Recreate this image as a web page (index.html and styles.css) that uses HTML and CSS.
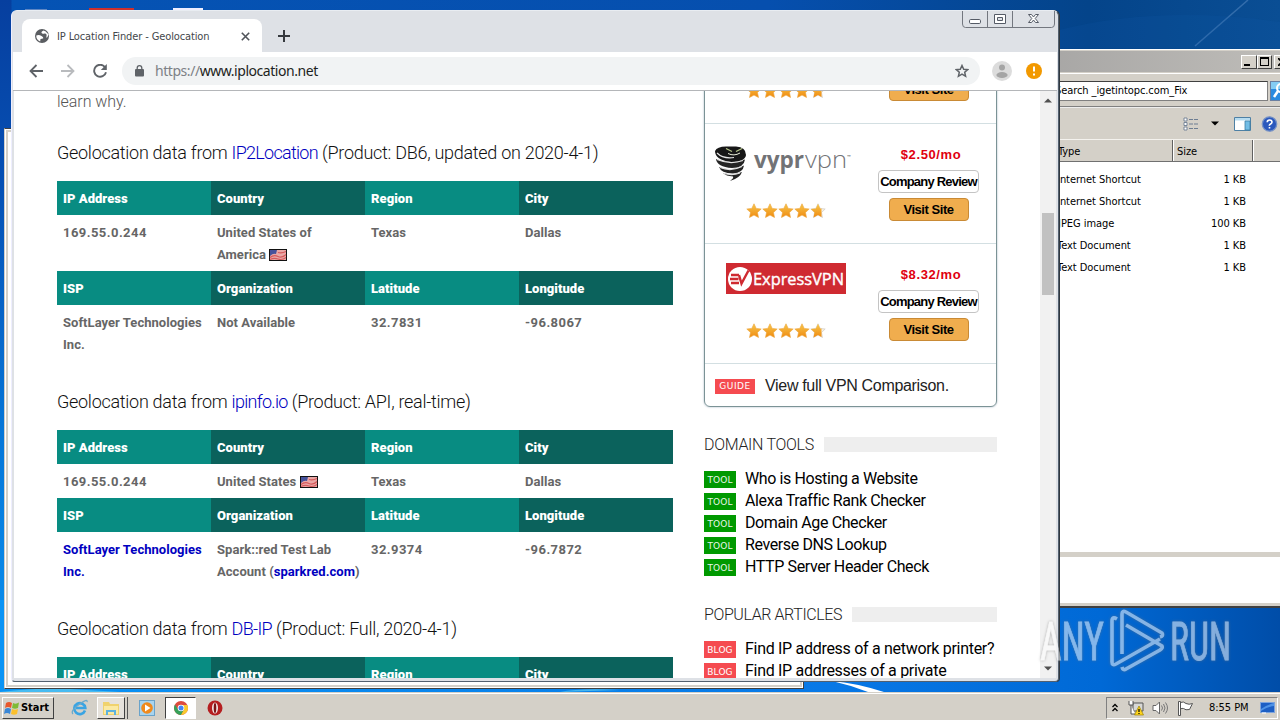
FILE: index.html
```html
<!DOCTYPE html>
<html lang="en">
<head>
<meta charset="utf-8">
<title>IP Location Finder - Geolocation</title>
<link rel="stylesheet" href="styles.css">
</head>
<body>
<svg class="defs" width="0" height="0">
  <defs>
    <linearGradient id="gold" x1="0" y1="0" x2="0" y2="1"><stop offset="0" stop-color="#f7c84e"/><stop offset="1" stop-color="#f08a10"/></linearGradient>
    <symbol id="star" viewBox="0 0 16 16"><path d="M8 .8l2.200 4.600 5 .6-3.700 3.500 1 5L8 12.100l-4.500 2.400 1-5L.8 6l5-.6z" fill="url(#gold)" stroke="#eda53a" stroke-width=".6"/></symbol>
    <symbol id="stars" viewBox="0 0 80 16">
      <use href="#star" x="0" width="16" height="16"/><use href="#star" x="16" width="16" height="16"/><use href="#star" x="32" width="16" height="16"/><use href="#star" x="48" width="16" height="16"/>
      <path d="M72 .8l2.200 4.600 5 .6-3.700 3.500 1 5L72 12.100l-4.500 2.400 1-5L64.800 6l5-.6z" fill="#f5f0e8" stroke="#c9c3b8" stroke-width=".6"/>
      <path d="M72 .8l2.200 4.600 1.300.2v8.300L72 12.100l-4.500 2.400 1-5L64.800 6l5-.6z" fill="url(#gold)"/>
    </symbol>
    <symbol id="flag" viewBox="0 0 18 12"><rect width="18" height="12" fill="#111"/><rect x="1" y="1" width="16" height="10" fill="#e9a7a5"/><path d="M1 8.500q4-3 8-1t8-2M9 3.500q4 1 8-1M1 10.500q4-2 8-.5t8-1.500" stroke="#d65a5c" stroke-width="1.200" fill="none"/><path d="M1 1h7l-1 4q-3-1-6 2z" fill="#46529b"/></symbol>
  </defs>
</svg>
<div class="desktop">
  <svg class="wallpaper" width="1280" height="720" viewBox="0 0 1280 720">
    <path d="M1195 46L1248 0" stroke="#4f83bd" stroke-width="1.500" opacity=".6"/>
    <path d="M1059 30Q1160 5 1280 22V48H1059z" fill="#1560ae" opacity=".15"/>
    <rect x="89" y="8" width="45" height="3" fill="#d0302c"/><rect x="173" y="8" width="30" height="3" fill="#eef"/><rect x="25" y="9" width="22" height="2" fill="#5f87c4"/>
    <path d="M832 681Q856 683 884 692H868Q850 685 832 681z" fill="#fff"/>
    <path d="M0 692Q40 687 70 689L120 692zM560 692Q580 688 620 690z" fill="#63cdf0" opacity=".7"/>
  </svg>

  <div class="back-window"></div>

  <div class="explorer">
    <div class="ex-title"><span class="ex-btn"><i class="g-min"></i></span><span class="ex-btn"><i class="g-max"></i></span><span class="ex-btn"><svg width="8" height="8" viewBox="0 0 8 8"><path d="M0 0l8 8M8 0L0 8" stroke="#000" stroke-width="1.700"/></svg></span></div>
    <div class="ex-search"><div class="ex-field"><span>Search _igetintopc.com_Fix</span></div>
      <svg width="20" height="20" viewBox="0 0 20 20"><rect x=".5" y=".5" width="19" height="19" fill="#2a8be0" stroke="#6a7fa0"/><path d="M1 1h18v7H1z" fill="#84cdf4"/><circle cx="11" cy="7" r="4" fill="none" stroke="#fff" stroke-width="2"/><path d="M8 10l-4 6" stroke="#fff" stroke-width="2.500"/></svg>
    </div>
    <div class="ex-tools">
      <svg class="tl-list" width="16" height="14" viewBox="0 0 16 14"><path d="M1 1h3v3H1zM1 5.500h3v3H1zM1 10h3v3H1z" fill="#fff" stroke="#6d7d92" stroke-width=".9"/><path d="M6 2.500h4M11 2.500h4M6 7h4M11 7h4M6 11.500h4M11 11.500h4" stroke="#6d7d92"/></svg>
      <svg class="tl-arrow" width="8" height="5"><path d="M0 .5h8L4 4.500z"/></svg>
      <svg class="tl-pane" width="17" height="14" viewBox="0 0 17 14"><path d="M.5.5h16v13H.5z" fill="#fff" stroke="#4e80a4"/><path d="M1 1h15v2.500H1z" fill="#b7dcf0"/><path d="M11 4h5v9h-5z" fill="#72bde5" stroke="#3d7fa5" stroke-width=".8"/></svg>
      <svg width="17" height="16" viewBox="0 0 17 16"><circle cx="8.500" cy="8" r="7.200" fill="#2a58bd" stroke="#7591c5" stroke-width="1.300"/><path d="M6.200 6.300Q6.200 4 8.600 4T11 6.100Q11 7.300 9.600 8T8.500 9.700M8.500 11v1.600" fill="none" stroke="#fff" stroke-width="1.600"/></svg>
    </div>
    <div class="ex-head"><span class="c-type">Type</span><span class="c-size">Size</span><span class="c-rest"></span></div>
    <div class="ex-list">
      <div class="ex-row"><span>Internet Shortcut</span><span>1 KB</span></div>
      <div class="ex-row"><span>Internet Shortcut</span><span>1 KB</span></div>
      <div class="ex-row jpeg"><span>JPEG image</span><span>100 KB</span></div>
      <div class="ex-row"><span>Text Document</span><span>1 KB</span></div>
      <div class="ex-row"><span>Text Document</span><span>1 KB</span></div>
    </div>
    <div class="ex-foot"></div>
  </div>

  <div class="chrome">
    <div class="tabstrip">
      <div class="tab">
        <svg width="14" height="14" viewBox="0 0 14 14"><circle cx="7" cy="7" r="7" fill="#5a5d61"/><path d="M1.300 6.500Q4 5.500 6.500 7T8 9.500L5.500 10 5.200 12.500Q1 11 1.300 6.500zM8.500 1.500Q6 2.500 6.500 3.800T9.500 4.500 11.500 7 12.700 7.500 12.500 4.500Q11 2 8.500 1.500z" fill="#fff"/></svg>
        <span class="tab-title">IP Location Finder - Geolocation</span>
        <svg width="9" height="9" viewBox="0 0 9 9"><path d="M.8.8l7.400 7.400M8.200.8L.8 8.200" stroke="#50545a" stroke-width="1.600"/></svg>
      </div>
      <svg class="plus" width="12" height="12" viewBox="0 0 12 12"><path d="M6 0v12M0 6h12" stroke="#36393e" stroke-width="2"/></svg>
      <svg class="winctl" width="93" height="17" viewBox="0 0 93 17">
        <path d="M.5 0v13q0 3.500 3 3.500h86q3 0 3-3.500V0M25.500 0v16M50.500 0v16" fill="none" stroke="#73777f"/>
        <rect x="7.500" y="8.500" width="11" height="4" rx="1.200" fill="#fff" stroke="#555b66"/>
        <path d="M32.500 3.500h11v9h-11zM35.500 6.500h5v3h-5z" fill="#fff" stroke="#555b66" fill-rule="evenodd"/>
        <path d="M66.500 3.500h3L71.500 6l2-2.500h3L73.200 7.500l3.300 4h-3l-2-2.500-2 2.500h-3l3.300-4z" fill="#fff" stroke="#555b66"/>
      </svg>
    </div>
    <div class="toolbar">
      <svg width="14" height="14" viewBox="0 0 14 14"><path d="M14 7H1.500M7.500 1L1.500 7l6 6" fill="none" stroke="#5f6368" stroke-width="1.800"/></svg>
      <svg class="fwd" width="14" height="14" viewBox="0 0 14 14"><path d="M0 7h12.500M6.500 1l6 6-6 6" fill="none" stroke="#b9bbbe" stroke-width="1.800"/></svg>
      <svg class="reload" width="14" height="14" viewBox="0 0 14 14"><path d="M12 3.200A6 6 0 1 0 13 8.200" fill="none" stroke="#5f6368" stroke-width="1.900"/><path d="M13.800 0v6H7.800z" fill="#5f6368"/></svg>
      <div class="omnibox">
        <svg width="9" height="12" viewBox="0 0 9 12"><rect y="4" width="9" height="7.500" rx="1" fill="#5f6368"/><path d="M2.200 5V3a2.300 2.300 0 0 1 4.600 0v2" fill="none" stroke="#5f6368" stroke-width="1.300"/></svg>
        <span class="url"><span class="dim">https://</span>www.iplocation.net</span>
        <svg width="14" height="14" viewBox="0 0 14 14"><path d="M7 1.500l1.700 3.700 4 .4-3 2.700.9 4L7 10.200l-3.600 2.100.9-4-3-2.700 4-.4z" fill="none" stroke="#5f6368" stroke-width="1.500"/></svg>
      </div>
      <svg class="avatar" width="20" height="20" viewBox="0 0 20 20"><circle cx="10" cy="10" r="10" fill="#dcdcdc"/><circle cx="10" cy="6.600" r="3" fill="#a5a5a5"/><ellipse cx="10" cy="14" rx="5.600" ry="3" fill="#a5a5a5"/></svg>
      <svg width="16" height="16" viewBox="0 0 16 16"><circle cx="8" cy="8" r="8" fill="#f29900"/><path d="M8 3.500v5M8 10.500v2" stroke="#fff" stroke-width="2"/></svg>
    </div>
    <div class="viewport">
      <div class="page">
        <div class="main">
          <p class="lead">learn why.</p>
          <h4>Geolocation data from <a>IP2Location</a> (Product: DB6, updated on 2020-4-1)</h4>
          <div class="grid">
            <b>IP Address</b><b>Country</b><b>Region</b><b>City</b>
            <span class="num">169.55.0.244</span><span>United States of<br>America <svg width="18" height="12"><use href="#flag"/></svg></span><span>Texas</span><span>Dallas</span>
            <b>ISP</b><b>Organization</b><b>Latitude</b><b>Longitude</b>
            <span>SoftLayer Technologies<br>Inc.</span><span>Not Available</span><span class="num">32.7831</span><span class="num">-96.8067</span>
          </div>
          <h4>Geolocation data from <a>ipinfo.io</a> (Product: API, real-time)</h4>
          <div class="grid">
            <b>IP Address</b><b>Country</b><b>Region</b><b>City</b>
            <span class="num">169.55.0.244</span><span>United States <svg width="18" height="12"><use href="#flag"/></svg></span><span>Texas</span><span>Dallas</span>
            <b>ISP</b><b>Organization</b><b>Latitude</b><b>Longitude</b>
            <span><a>SoftLayer Technologies<br>Inc.</a></span><span>Spark::red Test Lab<br>Account (<a>sparkred.com</a>)</span><span class="num">32.9374</span><span class="num">-96.7872</span>
          </div>
          <h4>Geolocation data from <a>DB-IP</a> (Product: Full, 2020-4-1)</h4>
          <div class="grid"><b>IP Address</b><b>Country</b><b>Region</b><b>City</b></div>
        </div>
        <div class="side">
          <div class="vpn-box">
            <div class="vpn">
              <div class="brand"><svg width="140" height="38"></svg><svg class="st" width="80" height="16"><use href="#stars"/></svg></div>
              <div class="offer"><div class="price"></div><div class="review ghost"></div><div class="visit">Visit Site</div></div>
            </div>
            <div class="vpn">
              <div class="brand">
                <svg width="140" height="38" viewBox="0 -2 140 38">
                  <path d="M1 6Q3 1.500 12 1.500h10Q32 2 32 10 31 17 17 17 1 15 1 6z" fill="#171717"/>
                  <path d="M2 14Q15 20 31 14.500 30 23 18 23 3 22 2 14zM5 22Q17 27 30 20.500 29 28 19 28.500 7 28 5 22zM9 28Q19 31 28 27 26 33 16 36 20 33 19 31.500 12 31 9 28z" fill="#242424"/>
                  <path d="M3 8Q9 14 20 12.500M3 14.500Q16 20 29 15.500M6 22.500Q17 27 28 21.500M10 28.500Q18 31 26 28" stroke="#e5e5e5" stroke-width="1.200" fill="none"/>
                  <path d="M12 3.500l6 3M28 3.500l-6 3" stroke="#b9c98e" stroke-width="1.300" fill="none"/><path d="M14 8.500q6 3 12-.5" stroke="#e8ecd9" stroke-width="1" fill="none"/>
                  <text x="40" y="23" font-family="Open Sans" font-weight="700" font-size="23" textLength="50" lengthAdjust="spacingAndGlyphs" fill="#727376">vypr</text>
                  <text x="91" y="23" font-family="Open Sans" font-weight="300" font-size="23" textLength="42" lengthAdjust="spacingAndGlyphs" fill="#727376">vpn</text>
                  <text x="133" y="14" font-family="Roboto" font-size="6" fill="#727376">™</text>
                </svg>
                <svg class="st" width="80" height="16"><use href="#stars"/></svg>
              </div>
              <div class="offer"><div class="price">$2.50/mo</div><div class="review">Company Review</div><div class="visit">Visit Site</div></div>
            </div>
            <div class="vpn">
              <div class="brand">
                <svg width="140" height="38" viewBox="0 1 140 38">
                  <rect x="12" y="0" width="120" height="32" fill="#cf2a31"/><circle cx="26" cy="17" r="12" fill="#fff"/>
                  <path d="M17 13h8M16 17h8.500M17 21h8M25 13l2.500 8.500 7-13" fill="none" stroke="#cf2a31" stroke-width="2.400"/>
                  <text x="39" y="23" font-family="Open Sans" font-weight="400" font-size="17" textLength="91" lengthAdjust="spacingAndGlyphs" fill="#fff" stroke="#fff" stroke-width=".4">ExpressVPN</text>
                </svg>
                <svg class="st" width="80" height="16"><use href="#stars"/></svg>
              </div>
              <div class="offer"><div class="price">$8.32/mo</div><div class="review">Company Review</div><div class="visit">Visit Site</div></div>
            </div>
            <div class="guide"><span class="tag red gtag">GUIDE</span><span class="guide-text">View full VPN Comparison.</span></div>
          </div>
          <h5 class="h-tools"><span>DOMAIN TOOLS</span><i></i></h5>
          <ul>
            <li><span class="tag">TOOL</span><span>Who is Hosting a Website</span></li>
            <li><span class="tag">TOOL</span><span>Alexa Traffic Rank Checker</span></li>
            <li><span class="tag">TOOL</span><span>Domain Age Checker</span></li>
            <li><span class="tag">TOOL</span><span>Reverse DNS Lookup</span></li>
            <li><span class="tag">TOOL</span><span>HTTP Server Header Check</span></li>
          </ul>
          <h5 class="h-art"><span>POPULAR ARTICLES</span><i></i></h5>
          <ul class="articles">
            <li><span class="tag red">BLOG</span><span>Find IP address of a network printer?</span></li>
            <li><span class="tag red">BLOG</span><span>Find IP addresses of a private</span></li>
          </ul>
        </div>
      </div>
      <div class="scrollbar">
        <svg width="8" height="5"><path d="M0 4.500h8L4 .5z" fill="#505050"/></svg>
        <div class="track"><div class="thumb"></div></div>
        <svg width="8" height="5"><path d="M0 .5h8L4 4.500z" fill="#505050"/></svg>
      </div>
    </div>
  </div>

  <svg class="watermark" width="200" height="70" viewBox="0 0 200 70">
    <g fill="#fff" stroke="#fff" stroke-width=".8" font-family="Roboto" font-size="53">
      <text x="4" y="55" textLength="64" lengthAdjust="spacingAndGlyphs">ANY</text>
      <text x="134" y="55" textLength="61" lengthAdjust="spacingAndGlyphs">RUN</text>
    </g>
    <path d="M81 13Q76 10 76 15V56Q76 60 80 58L124 33M86 48V8Q86 4 90 6L126 27Q128 30 124 31M90 19L126 40Q127 42 124 44L90 63Q87 65 86 61" transform="translate(0 1)" fill="none" stroke="#fff" stroke-width="3.600"/>
  </svg>

  <div class="taskbar">
    <div class="start">
      <svg width="16" height="16" viewBox="0 0 16 16"><path d="M2 3q3-2 6 0L7 8Q4 6 1 8z" fill="#e8582c"/><path d="M9 3q3 1.500 6-.5L14 8q-3 1.500-6 0z" fill="#7fba36"/><path d="M1 9q3-2 6 0l-1 5q-3-2-6 0z" fill="#3a87d6"/><path d="M8 9q3 1.500 6 0l-1 5q-3 1.500-6 0z" fill="#fbc02d"/></svg>
      <span>Start</span>
    </div>
    <svg class="ie" width="17" height="17" viewBox="0 0 17 17"><path d="M14 11.500A5.500 5.500 0 1 1 14.300 9H5" fill="none" stroke="#3aa4e3" stroke-width="2.600"/><path d="M2 15Q-1 12 8 5.500T16 3" fill="none" stroke="#6aa9cc" stroke-width="1.300"/></svg>
    <div class="task folder"><svg width="18" height="17" viewBox="0 0 18 17"><path d="M1 3h6l1 2h9v11H1z" fill="#f0d26d"/><path d="M2 7h14v8H2z" fill="#fbe9a2"/><path d="M4 16v-5h10v5h-2v-3H6v3z" fill="#5eb2de"/></svg></div>
    <svg class="wmp" width="16" height="16" viewBox="0 0 16 16"><rect x=".5" y=".5" width="15" height="15" fill="#a8d4ef" stroke="#6aa3ca"/><circle cx="8" cy="8" r="5.800" fill="#f08a1d"/><path d="M6 4.500v7L11.500 8z" fill="#fff"/></svg>
    <div class="task active"><svg width="14" height="14" viewBox="0 0 14 14"><circle cx="7" cy="7" r="7" fill="#dd4b3e"/><path d="M1 3.500A7 7 0 0 0 7 14l3-5.200-6-.3z" fill="#35a159"/><path d="M7 14A7 7 0 0 0 13.300 4H7l3 4.500z" fill="#f9c92d"/><circle cx="7" cy="7" r="3.300" fill="#fff"/><circle cx="7" cy="7" r="2.500" fill="#4285f4"/></svg></div>
    <svg class="opera" width="16" height="16" viewBox="0 0 16 16"><circle cx="8" cy="8" r="7.500" fill="#b51e20"/><ellipse cx="8" cy="8" rx="3" ry="5.500" fill="#f4e9e8"/><ellipse cx="8" cy="8" rx="1.300" ry="5" fill="#7b1416"/></svg>
    <div class="tray">
      <svg width="6" height="9" viewBox="0 0 6 9"><path d="M.5 4L3 1.500 5.500 4M.5 8L3 5.500 5.500 8" fill="none" stroke="#000" stroke-width="1.300"/></svg>
      <svg class="net" width="16" height="16" viewBox="0 0 16 16"><path d="M5 3h10v8H5z" fill="#d7d8d6" stroke="#555"/><path d="M1 1v4h4V1M3 5v9h4" fill="#fff" stroke="#555"/><path d="M11 6l4.500 9h-9z" fill="#ffd51c" stroke="#9b8000" stroke-width=".7"/><path d="M11 9v3M11 13v1" stroke="#000" stroke-width="1.200"/></svg>
      <svg class="vol" width="17" height="14" viewBox="0 0 17 14"><path d="M1 4.500h3L7.500 1v12L4 9.500H1z" fill="#fff" stroke="#666"/><path d="M9.500 4.500q2 2.500 0 5M11.500 3q3 4 0 8M13.500 1.500q4 5.500 0 11" fill="none" stroke="#777"/></svg>
      <svg class="flagico" width="16" height="16" viewBox="0 0 16 16"><path d="M1.500 15.500V1.500h2v14zM3.500 2.500q3-1.500 5.500 1 3 1.500 6.500 0l-3 6q-4 1-6-1-1.500-.5-3 .5z" fill="#fff" stroke="#555"/></svg>
      <span class="clock">8:55 PM</span>
      <svg width="15" height="12" viewBox="0 0 15 12"><rect x=".5" y=".5" width="14" height="10" fill="#1d5fc4" stroke="#7da4dd"/><path d="M1 7q8-5 13-6v3Q7 5 1 9z" fill="#4f93e6"/><path d="M2 11h4" stroke="#fff"/></svg>
    </div>
  </div>
</div>
</body>
</html>
```
FILE: styles.css
```css
* { box-sizing: border-box; }
body { margin: 0; overflow: hidden; }
svg { display: block; flex: none; }
.defs { position: absolute; }
.desktop {
  position: relative; width: 1280px; height: 720px; overflow: hidden;
  font-family: "DejaVu Sans Condensed", "DejaVu Sans", sans-serif; font-stretch: condensed; font-size: 11px; letter-spacing: -.04px; color: #000;
  background:
    linear-gradient(90deg, #0a94f5 0, #0878e6 65%, #0069d6 86%, #004da8 100%) 0 600px / 100% 120px no-repeat,
    linear-gradient(90deg, transparent 11px, #0553b4 12px, #064fae 60%, #04448a 85%, #0a4e94 100%) 0 0 / 100% 110px no-repeat,
    linear-gradient(#063f9f, #0650b4 25%, #0877d8 60%, #0a97f5);
}
.wallpaper { position: absolute; inset: 0; }

/* windows behind the browser */
.back-window { position: absolute; left: 4px; top: 128px; width: 800px; height: 561px; background: #fff; border: 1px solid #404040; border-left-color: #d4d0c8; box-shadow: inset 0 0 0 1px #fff, inset 0 0 0 3px #d4d0c8; }
.explorer { position: absolute; left: 1000px; top: 49px; width: 290px; height: 559px; background: #d4d0c8; border-top: 1px solid #fff; border-bottom: 2px solid #404040; display: flex; flex-direction: column; }
.ex-title { height: 22px; flex: none; margin-top: 1px; background: linear-gradient(90deg, #a3a2a1, #bfbdb9); display: flex; align-items: center; padding-left: 241px; border-bottom: 1px solid #d4d0c8; }
.ex-btn { width: 16px; height: 14px; background: #d4d0c8; border: 1px solid; border-color: #fff #404040 #404040 #fff; display: flex; align-items: center; justify-content: center; }
.ex-btn:last-child { margin-left: 2px; }
.g-min { width: 6px; height: 2px; background: #000; margin: 6px 3px 0 0; }
.g-max { width: 9px; height: 9px; border: 1px solid #000; border-top-width: 2px; }
.ex-search { height: 34px; flex: none; padding: 7px 0 6px; border-top: 1px solid #fff; border-bottom: 1px solid #808080; display: flex; gap: 2px; }
.ex-field { width: 269px; height: 20px; background: #fff; border: 1px solid #808080; border-top-color: #404040; padding-left: 54px; line-height: 18px; white-space: nowrap; letter-spacing: -.08px; }
.ex-tools { height: 32px; flex: none; border-top: 1px solid #eee; display: flex; align-items: center; padding-left: 183px; }
.tl-arrow { margin-left: 12px; }
.tl-pane { margin: 0 10px 0 15px; }
.ex-head { height: 23px; flex: none; display: flex; border-top: 1px solid #f4f2ee; border-bottom: 1px solid #707070; line-height: 23px; }
.c-type { width: 173px; padding-left: 58px; border-right: 1px solid #606060; }
.c-size { width: 80px; padding-left: 3px; border-left: 1px solid #fff; border-right: 1px solid #606060; }
.c-rest { flex: 1; border-left: 1px solid #fff; }
.ex-list { height: 390px; flex: none; background: #fff; padding-top: 7px; }
.ex-row { height: 22px; line-height: 22px; width: 246px; padding-left: 57px; display: flex; justify-content: space-between; }
.jpeg { padding-left: 58px; }
.ex-foot { flex: 1; background: #fff; border-top: 5px solid #d4d0c8; border-bottom: 3px solid #d4d0c8; }

/* browser */
.chrome { position: absolute; left: 11px; top: 10px; width: 1048px; height: 672px; padding: 1px 2px 3px; background: #dee1e6; border: 1px solid #53606f; border-top-color: #e9edf2; border-left-color: #eef; border-radius: 6px 6px 4px 4px; display: flex; flex-direction: column; box-shadow: 1px 0 0 #30383f; }
.tabstrip { height: 40px; flex: none; display: flex; align-items: flex-start; }
.tab { width: 240px; height: 33px; margin: 7px 0 0 8px; padding: 1px 12px 0 13px; display: flex; align-items: center; background: #fff; border-radius: 8px 8px 0 0; color: #44474b; }
.tab-title { flex: 1; margin-left: 8px; white-space: nowrap; letter-spacing: -.12px; }
.plus { margin: 18px 0 0 16px; }
.winctl { margin: -1px 1px 0 auto; }
.toolbar { height: 39px; flex: none; margin: 0 -1px; padding: 0 15px 0 16px; background: #fff; border-bottom: 1px solid #b4b6b9; display: flex; align-items: center; }
.fwd { margin-left: 18px; }
.reload { margin-left: 18px; }
.omnibox { width: 858px; height: 28px; margin: 0 12px 0 15px; padding: 0 11px 0 13px; border-radius: 14px; background: #f1f3f4; display: flex; align-items: center; }
.url { flex: 1; margin-left: 11px; font: 14px/20px "Noto Sans", sans-serif; letter-spacing: -.45px; color: #1d1f22; }
.dim { color: #7d8186; }
.avatar { margin-right: 14px; }
.viewport { flex: 1; min-height: 0; display: flex; background: #fff; }
.page { width: 1026px; overflow: hidden; display: flex; gap: 31px; padding-left: 43px; font-family: Roboto, sans-serif; font-stretch: normal; color: #222; }
.main { width: 616px; flex: none; }
.lead { margin: 0 0 24px; font-size: 16px; line-height: 22px; color: #555; font-weight: 300; }
h4 { margin: 0 0 14px; font-size: 18px; line-height: 31px; height: 30px; font-weight: 300; white-space: nowrap; color: #111; letter-spacing: -.28px; }
h4 a { letter-spacing: -.72px; }
a { color: #0000c0; }
.grid { display: grid; grid-template-columns: repeat(4, 154px); margin-bottom: 25px; font-size: 13px; line-height: 22px; font-weight: 700; white-space: nowrap; letter-spacing: .04px; }
.grid b, .grid span { padding: 7px 6px 5px; }
.grid span { color: #666; }
.grid .num { letter-spacing: .45px; }
.grid b { color: #fff; background: #088c82; }
.grid b:nth-of-type(even) { background: #0b625c; }
.grid svg { display: inline-block; vertical-align: -2px; }

.side { width: 293px; flex: none; margin-top: -87px; }
.vpn-box { height: 403px; border: 1px solid #7b9396; border-radius: 0 0 6px 6px; box-shadow: 0 0 2px #9ab; }
.vpn { height: 120px; margin-top: -1px; margin-bottom: 1px; border-bottom: 1px solid #d3dfe2; display: flex; font-family: "Liberation Sans", Arial, sans-serif; font-weight: 700; font-size: 13px; }
.brand { width: 160px; padding: 19px 0 0 9px; }
.st { margin: 22px 0 0 32px; }
.offer { flex: 1; padding: 21px 4px 0 0; display: flex; flex-direction: column; align-items: center; }
.price { height: 25px; line-height: 20px; color: #e0000f; letter-spacing: .6px; width: 106px; padding-left: 5px; text-align: center; }
.review { width: 101px; height: 23px; line-height: 21px; border: 1px solid #c4c4c4; border-radius: 4px; text-align: center; color: #000; white-space: nowrap; font-size: 13px; letter-spacing: -.78px; }
.ghost { visibility: hidden; }
.visit { width: 80px; height: 23px; margin-top: 5px; line-height: 21px; border: 1px solid #c98a35; border-radius: 4px; background: #f0ad4e; text-align: center; color: #000; letter-spacing: -.45px; }
.guide { height: 42px; padding: 0 0 0 10px; display: flex; align-items: center; }
.tag { width: 32px; height: 17px; flex: none; text-align: center; background: #090; color: #e8f5e8; font: 9px/18px "DejaVu Sans", sans-serif; letter-spacing: .1px; }
.red { background: #f54b50; color: #fff; }
.gtag { width: 40px; height: 15px; line-height: 15px; margin-top: 1px; letter-spacing: .5px; }
.guide-text { margin-left: 10px; font: 16px "Liberation Sans", Arial, sans-serif; letter-spacing: -.32px; }
h5 { margin: 26px 0 13px; height: 22px; display: flex; align-items: center; gap: 10px; font-size: 16px; font-weight: 300; white-space: nowrap; letter-spacing: -.3px; }
h5 i { flex: 1; height: 15px; background: #eee; }
.h-art { margin-top: 25px; letter-spacing: -.4px; }
ul { list-style: none; margin: 0; padding: 0; }
li { height: 22px; display: flex; align-items: center; gap: 9px; font-size: 16px; line-height: 20px; color: #000; white-space: nowrap; letter-spacing: -.39px; }
.articles li { letter-spacing: -.3px; }

.scrollbar { width: 16px; background: #f1f1f1; display: flex; flex-direction: column; align-items: center; padding: 7px 0; }
.track { flex: 1; width: 12px; padding-top: 110px; }
.thumb { height: 82px; background: #c1c1c1; }

.watermark { position: absolute; left: 1036px; top: 605px; opacity: .52; filter: drop-shadow(0 0 1.5px #777); }

.taskbar { position: absolute; left: 0; top: 692px; width: 1280px; height: 28px; background: #d4d0c8; border-top: 1px solid #d4d0c8; box-shadow: inset 0 1px #fff; display: flex; align-items: center; padding: 3px 2px 1px; }
.start { width: 52px; height: 22px; padding-left: 1px; display: flex; align-items: center; gap: 1px; font-weight: 700; border: 1px solid; border-color: #fff #404040 #404040 #fff; }
.ie { margin-left: 17px; }
.task { height: 22px; display: flex; align-items: center; justify-content: center; border: 1px solid; border-color: #fff #404040 #404040 #fff; }
.folder { width: 28px; margin-left: 9px; background: #e6e2dc; box-shadow: 2px 0 #d4d0c8, 3px 0 #555; }
.wmp { margin-left: 14px; }
.active { width: 31px; margin-left: 10px; background: #fff; border-color: #404040 #fff #fff #404040; }
.opera { margin-left: 11px; }
.tray { width: 172px; height: 22px; margin-left: auto; padding: 0 2px 0 5px; border: 1px solid; border-color: #808080 #fff #fff #808080; display: flex; align-items: center; }
.net { margin-left: 10px; }
.vol { margin-left: 8px; }
.flagico { margin-left: 8px; }
.clock { flex: 1; margin-left: 16px; white-space: nowrap; }
```
